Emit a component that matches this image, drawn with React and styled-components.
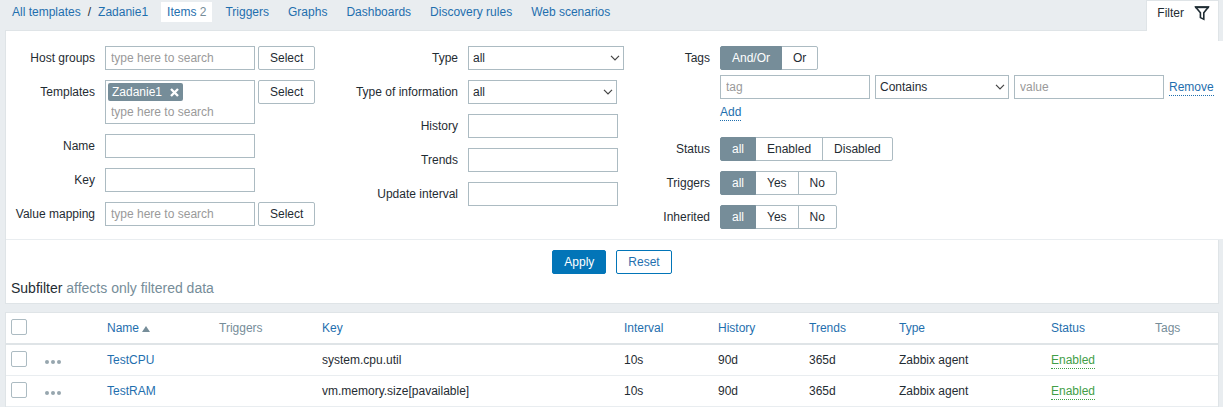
import React from "react";
import styled, { createGlobalStyle, css } from "styled-components";

const c = {
  bg: "#e9edf0",
  line: "#dfe4e7",
  text: "#1f2c33",
  link: "#1f6fae",
  primary: "#0275b8",
  grey: "#768d99",
  field: "#acbbc2",
  green: "#429e47",
};

const Global = createGlobalStyle`
  *, *::before, *::after { box-sizing: border-box; }
  body {
    margin: 0;
    background: ${c.bg};
    color: ${c.text};
    font: 12px/16px "Liberation Sans", Arial, sans-serif;
  }
  input, button, select { font: inherit; color: inherit; margin: 0; }
  a { color: ${c.link}; text-decoration: none; }
`;

const Page = styled.div`
  padding: 0 4px 0 5px;
`;

const TopBar = styled.header`
  display: flex;
  justify-content: space-between;
  align-items: flex-start;
  height: 30px;
`;

const Nav = styled.nav`
  display: flex;
  align-items: center;
  gap: 7px;
  padding: 2px 0 0 1px;
`;

const NavLink = styled.a`
  padding: 2px 6px;
  background: ${(p) => (p.$current ? "#fff" : "transparent")};

  sup {
    font-size: 12px;
    line-height: 16px;
    vertical-align: baseline;
    color: ${c.grey};
  }
`;

const Crumbs = styled.div`
  display: flex;
  padding: 2px 6px;
  gap: 7px;
`;

const FilterTab = styled.button`
  display: flex;
  align-items: center;
  gap: 10px;
  height: 31px;
  padding: 0 8px 6px 10px;
  border: 1px solid ${c.line};
  border-bottom: 0;
  background: #fff;
  position: relative;
`;

const Panel = styled.section`
  background: #fff;
  border: 1px solid ${c.line};
`;

const FilterPanel = styled(Panel)`
  padding-top: 10px;
  margin-bottom: 8px;
`;

const Fields = styled.div`
  display: grid;
  grid-template-columns: 1fr 1fr 569px;
  margin-right: -5px;
  padding: 5px 0 10px;
  background: #fff;
  border-bottom: 1px solid ${c.bg};
`;

const Column = styled.div`
  display: flex;
  flex-direction: column;
  gap: 10px;
`;

const Row = styled.div`
  display: grid;
  grid-template-columns: ${(p) => p.$label}px auto;
  justify-content: start;
  align-items: start;
  column-gap: 10px;
`;

const Label = styled.label`
  line-height: 24px;
  text-align: right;
  white-space: nowrap;
`;

const Line = styled.div`
  display: flex;
  align-items: flex-start;
  gap: ${(p) => p.$gap || 3}px;
`;

const Stack = styled.div`
  display: flex;
  flex-direction: column;
  align-items: flex-start;
  gap: 5px;
  padding-bottom: 6px;
`;

const box = css`
  height: 24px;
  border: 1px solid ${c.field};
  border-radius: 0;
  background: #fff;
`;

const TextInput = styled.input`
  ${box}
  width: 150px;
  padding: 0 5px;
  &::placeholder { color: #9a9a9a; opacity: 1; }
`;

const MultiBox = styled.div`
  width: 150px;
  height: 44px;
  padding: 2px;
  border: 1px solid ${c.field};

  ${TextInput} {
    width: 100%;
    height: 22px;
    padding: 0 3px;
    border: 0;
  }
`;

const Chip = styled.span`
  display: flex;
  align-items: center;
  gap: 8px;
  width: max-content;
  height: 18px;
  padding: 0 4px;
  border-radius: 2px;
  background: ${c.grey};
  color: #fff;

  button {
    display: flex;
    padding: 0;
    border: 0;
    background: none;
  }
`;

const SelectWrap = styled.span`
  position: relative;
  display: flex;
  width: ${(p) => p.$w}px;

  select {
    ${box}
    width: 100%;
    padding: 0 20px 0 4px;
    appearance: none;
  }
  svg {
    position: absolute;
    right: 4px;
    top: 8px;
    pointer-events: none;
  }
`;

const Button = styled.button`
  height: 24px;
  padding: 0 11px;
  border: 1px solid ${(p) => (p.$kind ? c.primary : c.field)};
  border-radius: 2px;
  background: ${(p) => (p.$kind === "primary" ? c.primary : "#fff")};
  color: ${(p) =>
    p.$kind === "primary" ? "#fff" : p.$kind ? c.link : c.text};
`;

const LinkButton = styled.button`
  padding: 1px 0 0;
  border: 0;
  border-bottom: 1px dotted ${(p) => (p.$green ? c.green : c.link)};
  background: none;
  color: ${(p) => (p.$green ? c.green : c.link)};
  line-height: 15px;
  align-self: ${(p) => (p.$center ? "center" : "auto")};
`;

const Segments = styled.div`
  display: flex;

  label {
    height: 24px;
    padding: 0 11px;
    border: 1px solid ${c.field};
    line-height: 22px;
  }
  label + label { margin-left: -1px; }
  label:first-child { border-radius: 2px 0 0 2px; }
  label:last-child { border-radius: 0 2px 2px 0; }
  label:has(input:checked) {
    border-color: ${c.grey};
    background: ${c.grey};
    color: #fff;
    position: relative;
  }
  input {
    position: absolute;
    opacity: 0;
    pointer-events: none;
  }
`;

const Actions = styled.div`
  display: flex;
  justify-content: center;
  gap: 10px;
  padding: 10px 0 6px;
`;

const Subfilter = styled.h4`
  margin: 0;
  padding: 0 5px 6px;
  font-size: 14px;
  line-height: 17px;
  font-weight: normal;
  span { color: ${c.grey}; }
`;

const Table = styled.table`
  width: 100%;
  table-layout: fixed;
  border-spacing: 0;

  th, td {
    padding: 0 5px;
    text-align: left;
    font-weight: normal;
    white-space: nowrap;
  }
  th {
    height: 32px;
    border-bottom: 2px solid ${c.line};
    color: ${c.grey};
  }
  td {
    height: 31px;
    border-bottom: 1px solid ${c.bg};
  }
`;

const Check = styled.input`
  && { margin-bottom: 2px; }
  appearance: none;
  display: block;
  width: 16px;
  height: 16px;
  border: 1px solid ${c.field};
  border-radius: 2px;
  background: #fff;
`;

const SortMark = styled.span`
  display: inline-block;
  margin-left: 3px;
  border: 4px solid transparent;
  border-top: 0;
  border-bottom: 6px solid ${c.grey};
`;

const Dots = styled.button`
  display: flex;
  gap: 2px;
  padding: 4px 0 0;
  border: 0;
  background: none;

  i {
    width: 4px;
    height: 4px;
    border-radius: 50%;
    background: #97a6ae;
  }
`;

function Choice({ label, name, options }) {
  return (
    <Segments role="radiogroup" aria-label={label}>
      {options.map((o, i) => (
        <label key={o}>
          <input type="radio" name={name} defaultChecked={i === 0} />
          {o}
        </label>
      ))}
    </Segments>
  );
}

function Select({ id, w, value, label }) {
  return (
    <SelectWrap $w={w}>
      <select id={id} aria-label={label}>
        <option>{value}</option>
      </select>
      <svg width="10" height="8" viewBox="0 0 10 8" fill="none" stroke="#444" strokeWidth="1.2">
        <path d="M1 1.8 5 5.8 9 1.8" />
      </svg>
    </SelectWrap>
  );
}

const hint = "type here to search";
const tabs = ["Triggers", "Graphs", "Dashboards", "Discovery rules", "Web scenarios"];
const widths = [34, 62, 112, 103, null, 94, 91, 90, 152, 104, 68];
const headers = [
  ["Triggers", false],
  ["Key", true],
  ["Interval", true],
  ["History", true],
  ["Trends", true],
  ["Type", true],
  ["Status", true],
  ["Tags", false],
];
const items = [
  { name: "TestCPU", key: "system.cpu.util" },
  { name: "TestRAM", key: "vm.memory.size[pavailable]" },
];

export default function App() {
  return (
    <Page>
      <Global />
      <TopBar>
        <Nav>
          <Crumbs>
            <a href="#templates">All templates</a>
            <span>/</span>
            <a href="#template">Zadanie1</a>
          </Crumbs>
          <NavLink href="#items" $current>
            Items <sup>2</sup>
          </NavLink>
          {tabs.map((t) => (
            <NavLink key={t} href="#tab">{t}</NavLink>
          ))}
        </Nav>
        <FilterTab type="button">
          Filter
          <svg width="16" height="15" viewBox="0 0 16 15" fill="none" stroke="#1f2c33" strokeWidth="1.6">
            <path d="M1.8 1.2H14.2L9.8 6.8V13.2L6.4 11.6V6.8Z" />
            <path d="M1 1.2H15" strokeWidth="2" />
          </svg>
        </FilterTab>
      </TopBar>

      <FilterPanel as="form">
        <Fields>
          <Column>
            <Row $label={89}>
              <Label htmlFor="groups">Host groups</Label>
              <Line>
                <TextInput id="groups" placeholder={hint} />
                <Button type="button">Select</Button>
              </Line>
            </Row>
            <Row $label={89}>
              <Label htmlFor="templates">Templates</Label>
              <Line>
                <MultiBox>
                  <Chip>
                    Zadanie1
                    <button type="button" aria-label="Remove Zadanie1">
                      <svg width="9" height="9" viewBox="0 0 9 9" stroke="#fff" strokeWidth="2.4">
                        <path d="M1 1 8 8M8 1 1 8" />
                      </svg>
                    </button>
                  </Chip>
                  <TextInput id="templates" placeholder={hint} />
                </MultiBox>
                <Button type="button">Select</Button>
              </Line>
            </Row>
            <Row $label={89}>
              <Label htmlFor="name">Name</Label>
              <TextInput id="name" />
            </Row>
            <Row $label={89}>
              <Label htmlFor="key">Key</Label>
              <TextInput id="key" />
            </Row>
            <Row $label={89}>
              <Label htmlFor="mapping">Value mapping</Label>
              <Line>
                <TextInput id="mapping" placeholder={hint} />
                <Button type="button">Select</Button>
              </Line>
            </Row>
          </Column>

          <Column>
            <Row $label={128}>
              <Label htmlFor="type">Type</Label>
              <Select id="type" w={156} value="all" />
            </Row>
            <Row $label={128}>
              <Label htmlFor="info">Type of information</Label>
              <Select id="info" w={149} value="all" />
            </Row>
            <Row $label={128}>
              <Label htmlFor="history">History</Label>
              <TextInput id="history" />
            </Row>
            <Row $label={128}>
              <Label htmlFor="trends">Trends</Label>
              <TextInput id="trends" />
            </Row>
            <Row $label={128}>
              <Label htmlFor="update">Update interval</Label>
              <TextInput id="update" />
            </Row>
          </Column>

          <Column>
            <Row $label={56}>
              <Label as="span">Tags</Label>
              <Stack>
                <Choice label="Tags" name="evaltype" options={["And/Or", "Or"]} />
                <Line $gap={5}>
                  <TextInput aria-label="Tag" placeholder="tag" />
                  <Select label="Operator" w={134} value="Contains" />
                  <TextInput aria-label="Value" placeholder="value" />
                  <LinkButton type="button" $center>Remove</LinkButton>
                </Line>
                <LinkButton type="button">Add</LinkButton>
              </Stack>
            </Row>
            <Row $label={56}>
              <Label as="span">Status</Label>
              <Choice label="Status" name="status" options={["all", "Enabled", "Disabled"]} />
            </Row>
            <Row $label={56}>
              <Label as="span">Triggers</Label>
              <Choice label="Triggers" name="triggers" options={["all", "Yes", "No"]} />
            </Row>
            <Row $label={56}>
              <Label as="span">Inherited</Label>
              <Choice label="Inherited" name="inherited" options={["all", "Yes", "No"]} />
            </Row>
          </Column>
        </Fields>
        <Actions>
          <Button type="button" $kind="primary">Apply</Button>
          <Button type="reset" $kind="outline">Reset</Button>
        </Actions>
        <Subfilter>
          Subfilter <span>affects only filtered data</span>
        </Subfilter>
      </FilterPanel>

      <Panel>
        <Table>
          <colgroup>
            {widths.map((w, i) => (
              <col key={i} width={w || undefined} />
            ))}
          </colgroup>
          <thead>
            <tr>
              <th><Check type="checkbox" aria-label="Select all" /></th>
              <th />
              <th><a href="#sort">Name<SortMark /></a></th>
              {headers.map(([h, sortable]) => (
                <th key={h}>{sortable ? <a href="#sort">{h}</a> : h}</th>
              ))}
            </tr>
          </thead>
          <tbody>
            {items.map((it) => (
              <tr key={it.name}>
                <td><Check type="checkbox" aria-label={it.name} /></td>
                <td>
                  <Dots type="button" aria-label="Menu"><i /><i /><i /></Dots>
                </td>
                <td><a href="#item">{it.name}</a></td>
                <td />
                <td>{it.key}</td>
                <td>10s</td>
                <td>90d</td>
                <td>365d</td>
                <td>Zabbix agent</td>
                <td><LinkButton type="button" $green>Enabled</LinkButton></td>
                <td />
              </tr>
            ))}
          </tbody>
        </Table>
      </Panel>
    </Page>
  );
}
